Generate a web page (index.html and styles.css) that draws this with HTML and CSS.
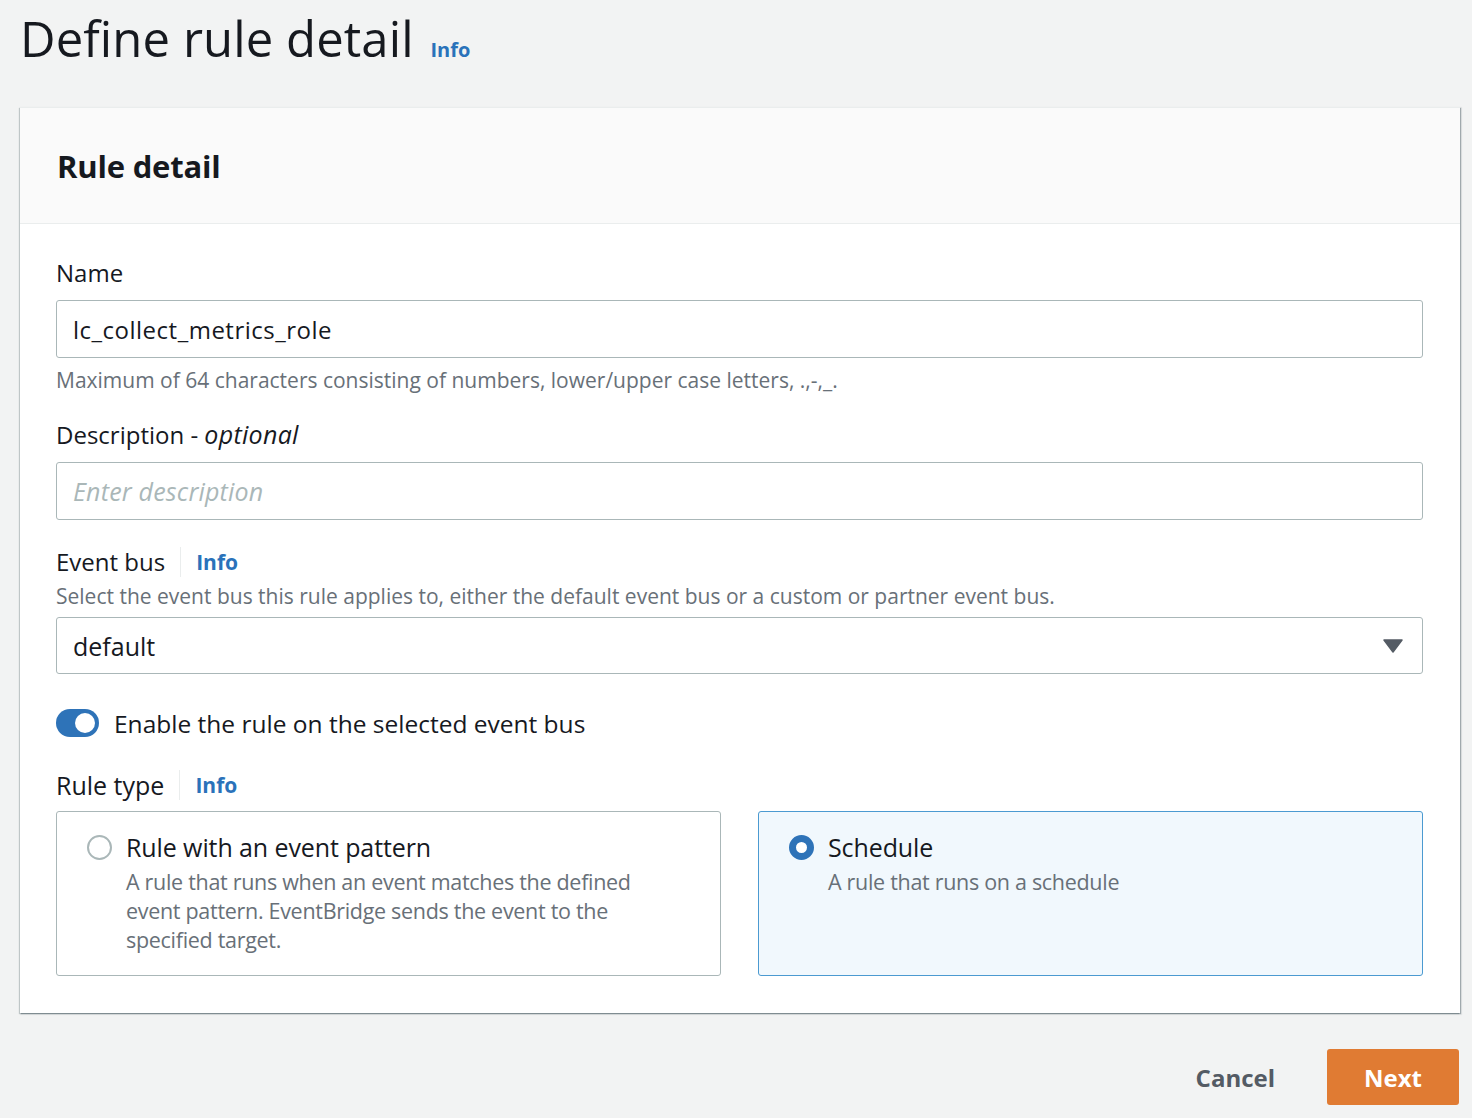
FILE: index.html
```html
<!DOCTYPE html>
<html lang="en">
<head>
<meta charset="utf-8">
<title>Define rule detail</title>
<link rel="stylesheet" href="styles.css">
</head>
<body>
<div class="page">
  <h1 class="page-title">Define rule detail <a class="info info-title" href="#">Info</a></h1>

  <section class="card">
    <header class="card-header">
      <h2 class="card-title">Rule detail</h2>
    </header>
    <div class="card-body">
      <div class="field field-name">
        <label class="label">Name</label>
        <div class="input input-name">lc_collect_metrics_role</div>
        <div class="hint">Maximum of 64 characters consisting of numbers, lower/upper case letters, .,-,_.</div>
      </div>

      <div class="field field-desc">
        <label class="label">Description - <em>optional</em></label>
        <div class="input input-desc placeholder">Enter description</div>
      </div>

      <div class="field field-bus">
        <div class="label label-info">
          <span>Event bus</span>
          <span class="divider"></span>
          <a class="info" href="#">Info</a>
        </div>
        <div class="hint hint-bus">Select the event bus this rule applies to, either the default event bus or a custom or partner event bus.</div>
        <div class="input select">
          <span>default</span>
          <svg class="caret" width="20" height="14" viewBox="0 0 20 14"><path d="M1 1 H19 L10 13 Z" fill="#545b64" stroke="#545b64" stroke-width="1.5" stroke-linejoin="round"/></svg>
        </div>
      </div>

      <div class="toggle-row">
        <span class="toggle"><span class="knob"></span></span>
        <span class="toggle-label">Enable the rule on the selected event bus</span>
      </div>

      <div class="field field-type">
        <div class="label label-info">
          <span>Rule type</span>
          <span class="divider"></span>
          <a class="info" href="#">Info</a>
        </div>
        <div class="tiles">
          <div class="tile">
            <span class="radio"></span>
            <div class="tile-text">
              <div class="tile-title">Rule with an event pattern</div>
              <div class="tile-desc">A rule that runs when an event matches the defined event pattern. EventBridge sends the event to the specified target.</div>
            </div>
          </div>
          <div class="tile tile-selected">
            <span class="radio radio-checked"></span>
            <div class="tile-text">
              <div class="tile-title">Schedule</div>
              <div class="tile-desc">A rule that runs on a schedule</div>
            </div>
          </div>
        </div>
      </div>
    </div>
  </section>

  <div class="actions">
    <button class="btn btn-link">Cancel</button>
    <button class="btn btn-primary">Next</button>
  </div>
</div>
</body>
</html>
```

FILE: styles.css
```css
* { box-sizing: border-box; }

body {
  margin: 0;
  background: #f2f3f3;
  color: #16191f;
  font-family: "Open Sans", "Noto Sans", sans-serif;
}

.page {
  padding: 0 12px 0 20px;
}

.page-title {
  margin: 0;
  padding-top: 6px;
  height: 107px;
  font-size: 49px;
  line-height: 64px;
  font-weight: 400;
  letter-spacing: 0.1px;
}

.info {
  color: #2a72ba;
  text-decoration: none;
  font-weight: 700;
  font-size: 20px;
  letter-spacing: 0;
}

.info-title {
  margin-left: 4px;
}

.card {
  background: #fff;
  box-shadow: 1px 1px 1px 0 rgba(0, 28, 36, 0.3), 1px 1px 1px 1px rgba(0, 28, 36, 0.05), -1px 1px 1px 0 rgba(0, 28, 36, 0.2);
  border-top: 1px solid #eaeded;
}

.card-header {
  height: 116px;
  background: #fafafa;
  border-bottom: 1px solid #eaeded;
  padding-left: 37px;
  display: flex;
  align-items: center;
}

.card-title {
  margin: 0;
  font-size: 31px;
  font-weight: 700;
  letter-spacing: -0.2px;
}

.card-body {
  padding: 34px 37px 37px 36px;
}

.label {
  display: block;
  font-size: 24px;
  line-height: 30px;
  height: 30px;
}

.label em {
  font-style: italic;
  font-size: 25px;
  line-height: 1;
  letter-spacing: 0.3px;
}

.label-info {
  display: flex;
  align-items: center;
}

.label-info .info {
  font-size: 21px;
}

.divider {
  width: 1px;
  height: 30px;
  background: #eaeded;
  margin: 0 15px;
}

.input {
  height: 58px;
  border: 1px solid #aab7b8;
  border-radius: 3px;
  padding: 0 16px;
  display: flex;
  align-items: center;
  font-size: 24px;
  margin-top: 12px;
  background: #fff;
}

.input-name {
  letter-spacing: 0.5px;
}

.placeholder {
  color: #aab7b8;
  font-style: italic;
  font-size: 25px;
  letter-spacing: 0.2px;
}

.hint {
  font-size: 21px;
  line-height: 26px;
  color: #687078;
  margin-top: 9px;
}

.field-desc { margin-top: 27px; }
.field-bus { margin-top: 27px; }

.hint-bus { margin-top: 6px; }

.select {
  margin-top: 8px;
  height: 57px;
  justify-content: space-between;
  padding-right: 19px;
}

.select span {
  font-size: 25px;
}

.caret { display: block; }

.toggle-row {
  margin-top: 34px;
  height: 30px;
  display: flex;
  align-items: center;
}

.toggle {
  width: 43px;
  height: 28px;
  border-radius: 14px;
  background: #2e73b8;
  position: relative;
  flex: none;
}

.knob {
  position: absolute;
  right: 4px;
  top: 4px;
  width: 20px;
  height: 20px;
  border-radius: 50%;
  background: #fff;
}

.toggle-label {
  margin-left: 15px;
  font-size: 24.5px;
}

.field-type { margin-top: 32px; }

.field-type .label {
  font-size: 25px;
}

.tiles {
  margin-top: 11px;
  display: grid;
  grid-template-columns: 1fr 1fr;
  gap: 37px;
}

.tile {
  height: 165px;
  border: 1px solid #aab7b8;
  border-radius: 3px;
  padding: 22px 20px 0 30px;
  display: flex;
  align-items: flex-start;
}

.tile-selected {
  background: #f1f8fd;
  border-color: #4b9ad1;
}

.radio {
  flex: none;
  width: 25px;
  height: 25px;
  border-radius: 50%;
  border: 2px solid #aab7b8;
  margin-top: 1px;
  background: #fff;
}

.radio-checked {
  border: 7px solid #2e73b8;
}

.tile-text {
  margin-left: 14px;
  max-width: 520px;
}

.tile-title {
  font-size: 25px;
  line-height: 27px;
  letter-spacing: -0.1px;
}

.tile-desc {
  margin-top: 6px;
  font-size: 21.5px;
  line-height: 29px;
  color: #687078;
  letter-spacing: -0.3px;
}

.actions {
  margin-top: 36px;
  display: flex;
  justify-content: flex-end;
  align-items: center;
}

.btn {
  font-family: inherit;
  font-weight: 700;
  font-size: 24px;
  border: none;
  cursor: pointer;
}

.btn-link {
  background: transparent;
  color: #545b64;
  padding: 0 20px;
  margin-right: 32px;
}

.btn-primary {
  width: 132px;
  height: 56px;
  background: #e07b33;
  color: #fff;
  border-radius: 3px;
  margin-right: 1px;
}
```
